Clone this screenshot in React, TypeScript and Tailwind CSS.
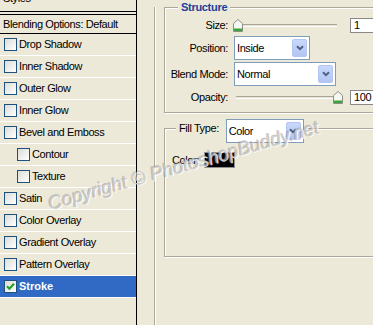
import type { ReactNode } from "react";

const effects = [
  { name: "Drop Shadow" },
  { name: "Inner Shadow" },
  { name: "Outer Glow" },
  { name: "Inner Glow" },
  { name: "Bevel and Emboss" },
  { name: "Contour", sub: true },
  { name: "Texture", sub: true },
  { name: "Satin" },
  { name: "Color Overlay" },
  { name: "Gradient Overlay" },
  { name: "Pattern Overlay" },
];

function Check({ checked = false }: { checked?: boolean }) {
  return (
    <span className="flex h-[13px] w-[13px] shrink-0 items-center justify-center border border-[#1c5180] bg-linear-to-br from-[#dcdcd7] to-white">
      {checked && (
        <svg width="9" height="9" viewBox="0 0 9 9">
          <path d="M1 4.2 L3.4 6.8 L8 1.8" stroke="#21a121" strokeWidth="2" fill="none" />
        </svg>
      )}
    </span>
  );
}

function Chevron() {
  return (
    <svg width="8" height="6" viewBox="0 0 8 6">
      <path d="M1 1.2 L4 4.2 L7 1.2" stroke="#4d6185" strokeWidth="2" fill="none" />
    </svg>
  );
}

function Select({ value, width }: { value: string; width: string }) {
  return (
    <div className={`flex h-[24px] shrink-0 items-center justify-between border border-[#7f9db9] bg-white pl-[2px] pr-[2px] ${width}`}>
      <span>{value}</span>
      <span className="flex h-[18px] w-[15px] items-center justify-center rounded-[2px] border border-[#b3c6f3] bg-linear-to-b from-[#c9d8fb] to-[#b2c6f2]">
        <Chevron />
      </span>
    </div>
  );
}

function Thumb({ left }: { left: string }) {
  return (
    <svg className={`absolute top-[2px] ${left}`} width="10" height="13" viewBox="0 0 10 13">
      <path d="M0.5 12.5 V4.5 L5 0.5 L9.5 4.5 V12.5 Z" fill="#f7f7f2" stroke="#8c8c88" />
      <rect x="1" y="9.5" width="8" height="2.5" fill="#35a835" />
    </svg>
  );
}

function Slider({ left }: { left: string }) {
  return (
    <div className="relative h-[16px] w-[110px] shrink-0">
      <div className="absolute left-[2px] right-[7px] top-[7px] h-[3px] border-y border-t-[#aca899] border-b-white bg-[#e4e1d2]" />
      <Thumb left={left} />
    </div>
  );
}

function Field({ value }: { value: string }) {
  return (
    <div className="flex h-[15px] w-[40px] shrink-0 items-center border border-[#8a8a8a] bg-white pl-[3px]">
      {value}
    </div>
  );
}

function Row({ label, children, className = "" }: { label: string; children: ReactNode; className?: string }) {
  return (
    <div className={`flex items-center gap-[6px] ${className}`}>
      <div className="w-[63px] shrink-0 text-right">{label}</div>
      {children}
    </div>
  );
}

export default function App() {
  return (
    <div className="relative flex h-[325px] w-[373px] overflow-hidden bg-[#ece9d8] font-['Liberation_Sans',Arial,sans-serif] text-[11px] tracking-[-0.4px] text-black">
      {/* styles list */}
      <div className="flex w-[137px] shrink-0 flex-col border-r border-black">
        <div className="h-[11px] overflow-hidden">
          <div className="-mt-[9px] px-[3px] leading-[14px]">Styles</div>
        </div>
        <div className="h-[4px] border-y border-black" />
        <div className="flex h-[19px] items-center border-b border-black px-[3px]">
          Blending Options: Default
        </div>
        {effects.map((e) => (
          <div
            key={e.name}
            className={`flex h-[22px] items-center gap-[2px] border-b border-white ${e.sub ? "pl-[17px]" : "pl-[4px]"}`}
          >
            <Check />
            <span>{e.name}</span>
          </div>
        ))}
        <div className="flex h-[22px] items-center gap-[2px] border-b border-white bg-[#316ac5] pl-[4px] font-bold tracking-normal text-white">
          <Check checked />
          <span>Stroke</span>
        </div>
      </div>

      {/* options */}
      <div className="flex-1 pl-[17px]">
        <div className="h-full border-l border-[#aca899] pl-[9px] shadow-[inset_1px_0_0_#fff]">
          {/* structure */}
          <div className="relative mt-[7px] h-[106px] w-[230px] border border-[#aca899] shadow-[1px_1px_0_#fff,inset_1px_1px_0_#fff]">
            <div className="absolute -top-[8px] left-[13px] bg-[#ece9d8] px-[3px] leading-[14px] font-bold tracking-[-0.3px] text-[#1b3f9b]">
              Structure
            </div>
            <div className="flex flex-col pt-[9px]">
              <Row label="Size:" className="h-[16px]">
                <Slider left="-left-[1px]" />
                <Field value="1" />
              </Row>
              <Row label="Position:" className="mt-[3px]">
                <Select value="Inside" width="w-[76px]" />
              </Row>
              <Row label="Blend Mode:" className="mt-[2px]">
                <Select value="Normal" width="w-[102px]" />
              </Row>
              <Row label="Opacity:" className="mt-[3px] h-[16px]">
                <Slider left="left-[99px]" />
                <Field value="100" />
              </Row>
            </div>
          </div>

          {/* fill type */}
          <div className="relative mt-[15px] h-[129px] w-[230px] border border-[#aca899] shadow-[1px_1px_0_#fff,inset_1px_1px_0_#fff]">
            <div className="absolute -top-[10px] left-[11px] flex items-start gap-[7px] bg-[#ece9d8] px-[3px]">
              <span className="mt-[2px] leading-[14px]">Fill Type:</span>
              <Select value="Color" width="w-[78px]" />
            </div>
            <div className="flex items-center gap-[5px] pl-[7px] pt-[23px]">
              <span>Color:</span>
              <div className="h-[16px] w-[31px] border border-[#8f8f8f] bg-black" />
            </div>
          </div>
        </div>
      </div>

      {/* watermark */}
      <div className="pointer-events-none absolute left-[184px] top-[166px] -translate-x-1/2 -translate-y-1/2 rotate-[-16deg] whitespace-nowrap text-[19px] italic tracking-normal text-[#c4c4c4]/80 [text-shadow:1px_1px_0_rgba(255,255,255,0.85),-1px_-1px_0_rgba(120,120,120,0.4)]">
        Copyright © PhotoshopBuddy.net
      </div>
    </div>
  );
}
